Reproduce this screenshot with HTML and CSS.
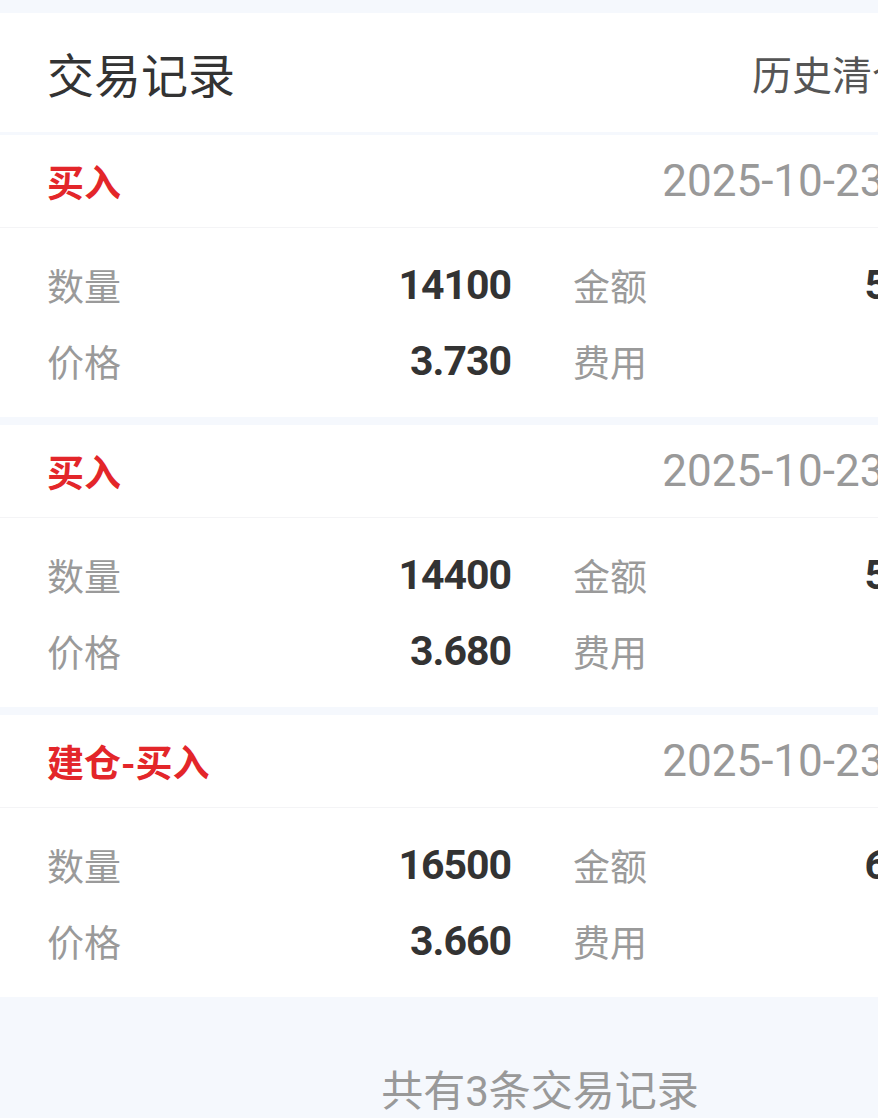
FILE: index.html
```html
<!DOCTYPE html>
<html lang="zh-CN">
<head>
    <meta charset="UTF-8">
    <meta name="viewport" content="width=device-width, initial-scale=1.0">
    <title>交易记录</title>
    <link rel="stylesheet" href="styles.css">
</head>
<body>
    <div class="page">

        <!-- Header -->
        <div class="topbar">
            <div class="topbar-title">交易记录</div>
            <div class="topbar-link">
                历史清仓记录
                <svg class="chev" width="28" height="28" viewBox="0 0 24 24"><path d="M9 5l7 7-7 7" fill="none" stroke="#999" stroke-width="2" stroke-linecap="round" stroke-linejoin="round"/></svg>
            </div>
        </div>

        <!-- Record 1 -->
        <div class="record">
            <div class="record-head">
                <div class="record-type">买入</div>
                <div class="record-date">2025-10-23<span class="record-time">10:42</span></div>
            </div>
            <div class="record-body">
                <div class="cell"><span class="label">数量</span><span class="value">14100</span></div>
                <div class="cell"><span class="label">金额</span><span class="value">52593.00</span></div>
                <div class="cell"><span class="label">价格</span><span class="value">3.730</span></div>
                <div class="cell"><span class="label">费用</span><span class="value">5.26</span></div>
            </div>
        </div>

        <!-- Record 2 -->
        <div class="record">
            <div class="record-head">
                <div class="record-type">买入</div>
                <div class="record-date">2025-10-23<span class="record-time">10:15</span></div>
            </div>
            <div class="record-body">
                <div class="cell"><span class="label">数量</span><span class="value">14400</span></div>
                <div class="cell"><span class="label">金额</span><span class="value">52992.00</span></div>
                <div class="cell"><span class="label">价格</span><span class="value">3.680</span></div>
                <div class="cell"><span class="label">费用</span><span class="value">5.30</span></div>
            </div>
        </div>

        <!-- Record 3 -->
        <div class="record">
            <div class="record-head">
                <div class="record-type">建仓-买入</div>
                <div class="record-date">2025-10-23<span class="record-time">09:31</span></div>
            </div>
            <div class="record-body">
                <div class="cell"><span class="label">数量</span><span class="value">16500</span></div>
                <div class="cell"><span class="label">金额</span><span class="value">60390.00</span></div>
                <div class="cell"><span class="label">价格</span><span class="value">3.660</span></div>
                <div class="cell"><span class="label">费用</span><span class="value">6.04</span></div>
            </div>
        </div>

        <!-- Footer -->
        <div class="footer">共有3条交易记录</div>
    </div>
</body>
</html>
```

FILE: styles.css
```css
/* General */
body {
    margin: 0;
    padding: 0;
    background-color: #f5f8fd;
    font-family: Roboto, "Noto Sans CJK SC", sans-serif;
    overflow: hidden;
}

/* Phone-width page, wider than the window: the right side is cut off */
.page {
    width: 1080px;
    padding-top: 13px;
}

/* Header */
.topbar {
    height: 119px;
    background: #fff;
    padding: 0 47px;
    margin-bottom: 3px;
    display: flex;
    align-items: center;
    justify-content: space-between;
}

.topbar-title {
    font-size: 47px;
    color: #333;
}

.topbar-link {
    font-size: 40px;
    color: #555;
    display: flex;
    align-items: center;
}

.chev {
    margin-left: 13px;
}

/* Record card */
.record {
    background: #fff;
    margin-bottom: 8px;
}

.record-head {
    height: 92px;
    padding: 0 47px;
    border-bottom: 1px solid #f4f4f6;
    display: flex;
    align-items: center;
    justify-content: space-between;
}

.record-type {
    font-size: 37px;
    font-weight: bold;
    color: #e3262a;
}

.record-date {
    font-size: 44px;
    color: #999;
}

.record-time {
    margin-left: 39px;
}

.record-body {
    display: grid;
    grid-template-columns: 464px 460px;
    column-gap: 62px;
    padding: 19px 47px 18px;
}

.cell {
    height: 76px;
    display: flex;
    align-items: center;
    justify-content: space-between;
}

.label {
    font-size: 37px;
    color: #9a9a9a;
}

.value {
    font-size: 41px;
    font-weight: bold;
    color: #333;
    letter-spacing: -1px;
}

/* Footer */
.footer {
    padding-top: 52px;
    text-align: center;
    font-size: 42px;
    color: #999;
}
```
